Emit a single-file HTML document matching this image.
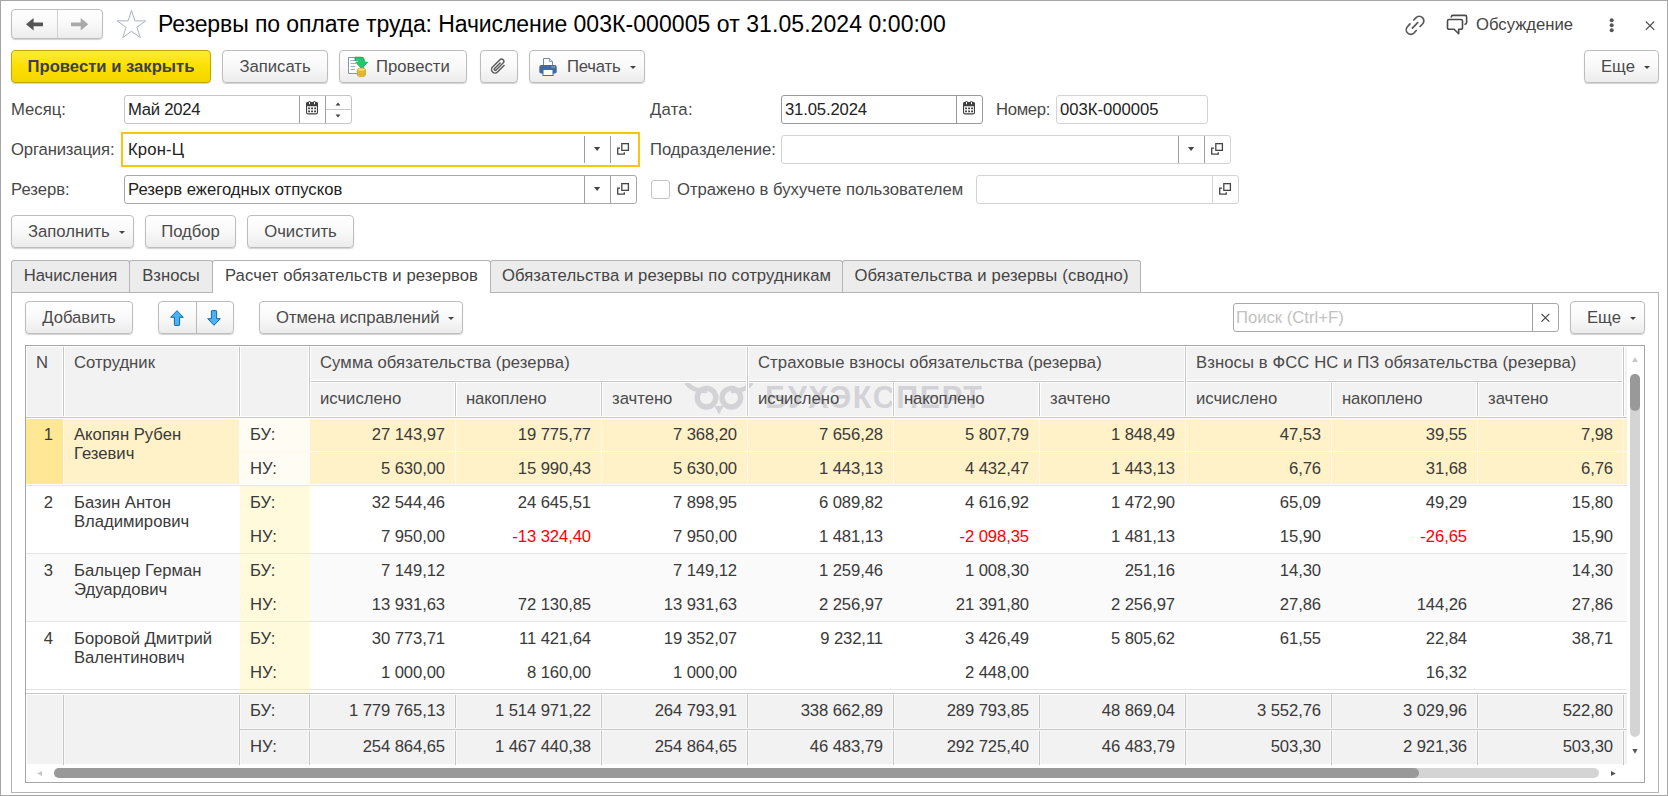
<!DOCTYPE html>
<html lang="ru"><head><meta charset="utf-8"><title>Резервы по оплате труда</title>
<style>
*{box-sizing:border-box;margin:0;padding:0}
html,body{width:1668px;height:796px;overflow:hidden;background:#fff}
body{font-family:"Liberation Sans",Arial,sans-serif;font-size:16.67px;color:#333;position:relative}
.abs,.btn,.lbl,.inp,.tab,.t,.tri{position:absolute}
#frame{position:absolute;left:0;top:0;width:1668px;height:796px;border:1px solid #a6a6a6}
.btn{height:33px;border:1px solid #bdbdbd;border-radius:4px;background:linear-gradient(#ffffff 0%,#f9f9f9 50%,#ececec 100%);box-shadow:0 1px 1px rgba(0,0,0,.18);line-height:32px;text-align:center;color:#4a4a4a;white-space:nowrap}
.btn.y{background:linear-gradient(#ffeb3a 0%,#fde000 50%,#f4d500 100%);border-color:#c2a600;font-weight:bold;color:#3c3f4e}
.lbl{line-height:20px;color:#484848;white-space:nowrap}
.inp{height:29px;border:1px solid #c4c4c4;border-radius:3px;background:#fff;line-height:27px;padding-left:3px;color:#222;white-space:nowrap}
.inp .sep{position:absolute;top:0;bottom:0;width:1px;background:#c4c4c4}
.inp.d{border-color:#a8a8a8}.inp.d .sep{background:#a0a0a0}
.inp.dd{border-color:#9a9a9a}.inp.dd .sep{background:#9a9a9a}
.inp.m{border-color:#c6c6c6}.inp.m .sep{background:#a0a0a0}
.inp.l{border-color:#d4d4d4}.inp.l .sep{background:#d4d4d4}.inp.ds .sep{background:#a0a0a0}
.tri{width:0;height:0;border-left:4px solid transparent;border-right:4px solid transparent;border-top:4px solid #444}
.tab{top:260px;height:32px;border:1px solid #b4b4b4;border-bottom:none;border-radius:3px 3px 0 0;background:#ececec;line-height:29px;text-align:center;color:#444;white-space:nowrap}
.tab.a{background:#fff;height:33px;z-index:2}
.t{white-space:nowrap;line-height:21px;color:#3a3a3a}
.h{color:#4a4a4a}
.r{text-align:right;letter-spacing:-.1px}
.neg{color:#ff0000}

</style></head><body>
<div id="frame"></div>

<div class="btn" style="left:11px;top:9px;width:92px;height:30px;border-radius:4px"></div>
<div class="abs" style="left:57px;top:10px;width:1px;height:28px;background:#cfcfcf"></div>
<svg class="abs" style="left:26px;top:18px" width="18" height="13" viewBox="0 0 18 13"><path d="M0 6.300 L7.600 0 V4.400 H17 V8.300 H7.600 V12.600 Z" fill="#555"/></svg>
<svg class="abs" style="left:71px;top:18px" width="18" height="13" viewBox="0 0 18 13"><path d="M17.300 6.300 L9.700 0 V4.400 H0 V8.300 H9.700 V12.600 Z" fill="#aaa"/></svg>
<svg class="abs" style="left:116px;top:9px" width="32" height="32" viewBox="0 0 32 32"><path d="M15.50 1.50 L18.87 11.86 L29.77 11.86 L20.95 18.27 L24.32 28.64 L15.50 22.23 L6.68 28.64 L10.05 18.27 L1.23 11.86 L12.13 11.86 Z" fill="#fff" stroke="#a9b3be" stroke-width="1" stroke-linejoin="miter"/></svg>
<div class="t" id="title" style="left:158px;top:10px;font-size:23px;line-height:28px;color:#000"><span style="letter-spacing:-.09px">Резервы по оплате труда: Начисление </span><span style="letter-spacing:.07px">003К-000005 от 31.05.2024 0:00:00</span></div>
<svg class="abs" style="left:1405px;top:15px" width="21" height="21" viewBox="0 0 21 21" fill="none" stroke="#585858" stroke-width="1.700" stroke-linecap="round"><path d="M8.800 5 L11.100 2.600 A4.500 4.500 0 0 1 17.500 9 L15.100 11.500"/><path d="M5 8.900 L2.600 11.600 A4.500 4.500 0 0 0 9 18 L11.200 15.500"/><path d="M7.400 13.100 L12.700 7.600"/></svg>
<svg class="abs" style="left:1446px;top:14px" width="22" height="22" viewBox="0 0 22 22" fill="none" stroke="#4a4a4a" stroke-width="1.600" stroke-linejoin="round" stroke-linecap="round"><path d="M5.300 3 A1.600 1.600 0 0 1 6.900 1.400 H19 A1.600 1.600 0 0 1 20.600 3 V8.600 A1.600 1.600 0 0 1 19 10.200"/><path d="M3 5.500 H15 A1.500 1.500 0 0 1 16.500 7 V13.800 A1.500 1.500 0 0 1 15 15.300 H12.700 V19.800 L8.100 15.300 H3 A1.500 1.500 0 0 1 1.500 13.800 V7 A1.500 1.500 0 0 1 3 5.500 Z"/></svg>
<div class="t" style="left:1476px;top:14px;color:#444">Обсуждение</div>
<svg class="abs" style="left:1608px;top:17px" width="8" height="17" viewBox="0 0 8 17" fill="#555"><circle cx="3.700" cy="3.300" r="2"/><circle cx="3.700" cy="8.250" r="2"/><circle cx="3.700" cy="13.200" r="2"/></svg>
<svg class="abs" style="left:1645px;top:21px" width="10" height="10" viewBox="0 0 10 10" stroke="#555" stroke-width="1.300"><path d="M0.800 0.500 L9.200 8.900 M9.200 0.500 L0.800 8.900"/></svg>
<div class="btn y" style="left:11px;top:50px;width:200px;height:33px;">Провести и закрыть</div><div class="btn " style="left:222px;top:50px;width:106px;height:33px;">Записать</div><div class="btn " style="left:339px;top:50px;width:128px;height:33px;text-align:left;padding-left:36px;">Провести</div><svg class="abs" style="left:347px;top:56px" width="24" height="24" viewBox="0 0 24 24">
<path d="M1.500 1.500 H16.500 V17.500 H1.500 Z" fill="#fff" stroke="#8197b8" stroke-width="1"/>
<path d="M3.500 4.500 H9 M3.500 7.500 H9 M3.500 10.500 H8.500 M3.500 13.500 H8" stroke="#9db0cb" stroke-width="1"/>
<path d="M8 1.200 H13.500 C16.600 1.200 17.700 3.500 17.700 6.200 H20.600 L14.700 12.800 L8.800 6.200 H11.700 C11.700 5 11.200 4.600 10 4.600 H8 Z" fill="#25c76e" stroke="#14a355" stroke-width=".8" stroke-linejoin="round"/>
<path d="M10.300 13.600 V19 A4.050 1.700 0 0 0 18.400 19 V13.600 Z" fill="#f3c935" stroke="#c59c1c" stroke-width=".7"/>
<ellipse cx="14.350" cy="13.600" rx="4.050" ry="1.700" fill="#fbe27a" stroke="#c59c1c" stroke-width=".7"/>
<path d="M10.300 15.500 A4.050 1.700 0 0 0 18.400 15.500 M10.300 17.300 A4.050 1.700 0 0 0 18.400 17.300" fill="none" stroke="#c59c1c" stroke-width=".7"/>
</svg><div class="btn " style="left:480px;top:50px;width:38px;height:33px;"></div><svg class="abs" style="left:490px;top:58px" width="17" height="17" viewBox="0 0 17 17" fill="none" stroke="#5a5a5a" stroke-width="1.600" stroke-linecap="round"><g transform="translate(8.300,8.300) rotate(45) scale(.92)"><path d="M3.800 -5 V5 a3.800 3.800 0 0 1 -7.600 0 V-6.200 a2.500 2.500 0 0 1 5 0 V4.500 a1.200 1.200 0 0 1 -2.400 0 V-4"/></g></svg><div class="btn " style="left:529px;top:50px;width:116px;height:33px;text-align:left;padding-left:37px;"><span style="letter-spacing:-.2px">Печать</span></div><svg class="abs" style="left:539px;top:58px" width="18" height="18" viewBox="0 0 18 18">
<path d="M4.500 8 V0.500 H10.500 L13.500 3.500 V8 Z" fill="#fff" stroke="#6f89a8" stroke-width="1"/><path d="M10.500 0.500 V3.500 H13.500" fill="#e8eef5" stroke="#6f89a8" stroke-width=".8"/>
<rect x="0.300" y="7" width="17.400" height="8.600" rx="2" fill="#41699a"/>
<rect x="4" y="11.500" width="10" height="6" fill="#fff" stroke="#41699a" stroke-width="1"/>
<rect x="12.600" y="8.500" width="1" height="1" fill="#fff"/><rect x="14.600" y="8.500" width="1" height="1" fill="#fff"/>
</svg><svg class="abs" style="left:630px;top:66px" width="6" height="3" viewBox="0 0 6 3"><path d="M0 0 H6 L3 3 Z" fill="#444"/></svg><div class="btn " style="left:1584px;top:50px;width:75px;height:33px;text-align:left;padding-left:16px;">Еще</div><svg class="abs" style="left:1644px;top:66px" width="6" height="3" viewBox="0 0 6 3"><path d="M0 0 H6 L3 3 Z" fill="#444"/></svg><div class="lbl" style="left:11px;top:100px">Месяц:</div><div class="inp m" style="left:124px;top:95px;width:228px;height:29px;"><span style="letter-spacing:-.27px">Май 2024</span><i class="sep" style="left:174px"></i><i class="sep" style="left:200px"></i></div><svg class="abs" style="left:306px;top:101px" width="12" height="14" viewBox="0 0 12 14"><rect x="0.550" y="1.600" width="10.900" height="11.300" rx="1.500" fill="#fff" stroke="#3f3f3f" stroke-width="1.100"/><path d="M0 5.200 V3 a2 2 0 0 1 2 -2 H10 a2 2 0 0 1 2 2 V5.200 Z" fill="#3f3f3f"/><circle cx="3.500" cy="1.500" r="1.500" fill="#3f3f3f"/><circle cx="8.500" cy="1.500" r="1.500" fill="#3f3f3f"/><rect x="3" y="0.800" width="1" height="2.500" rx=".5" fill="#fff"/><rect x="8" y="0.800" width="1" height="2.500" rx=".5" fill="#fff"/><path d="M2.200 6.500 h1.700 v1.700 h-1.700z M5.200 6.500 h1.700 v1.700 h-1.700z M8.200 6.500 h1.700 v1.700 h-1.700z M2.200 9.500 h1.700 v1.700 h-1.700z M5.200 9.500 h1.700 v1.700 h-1.700z M8.200 9.500 h1.700 v1.700 h-1.700z" fill="#2e2e2e"/></svg><div class="abs" style="left:326px;top:109px;width:25px;height:1px;background:#c9c9c9"></div><svg class="abs" style="left:335px;top:102px" width="6" height="4" viewBox="0 0 6 4"><path d="M0.500 3.400 L3 0.400 L5.500 3.400 Z" fill="#444"/></svg><svg class="abs" style="left:335px;top:114px" width="6" height="4" viewBox="0 0 6 4"><path d="M0.500 0.600 L3 3.600 L5.500 0.600 Z" fill="#444"/></svg><div class="lbl" style="left:650px;top:100px"><span style="letter-spacing:.25px">Дата:</span></div><div class="inp dd" style="left:781px;top:95px;width:202px;height:29px;"><span style="letter-spacing:-.15px">31.05.2024</span><i class="sep" style="left:174px"></i></div><svg class="abs" style="left:963px;top:101px" width="12" height="14" viewBox="0 0 12 14"><rect x="0.550" y="1.600" width="10.900" height="11.300" rx="1.500" fill="#fff" stroke="#3f3f3f" stroke-width="1.100"/><path d="M0 5.200 V3 a2 2 0 0 1 2 -2 H10 a2 2 0 0 1 2 2 V5.200 Z" fill="#3f3f3f"/><circle cx="3.500" cy="1.500" r="1.500" fill="#3f3f3f"/><circle cx="8.500" cy="1.500" r="1.500" fill="#3f3f3f"/><rect x="3" y="0.800" width="1" height="2.500" rx=".5" fill="#fff"/><rect x="8" y="0.800" width="1" height="2.500" rx=".5" fill="#fff"/><path d="M2.200 6.500 h1.700 v1.700 h-1.700z M5.200 6.500 h1.700 v1.700 h-1.700z M8.200 6.500 h1.700 v1.700 h-1.700z M2.200 9.500 h1.700 v1.700 h-1.700z M5.200 9.500 h1.700 v1.700 h-1.700z M8.200 9.500 h1.700 v1.700 h-1.700z" fill="#2e2e2e"/></svg><div class="lbl" style="left:996px;top:100px"><span style="letter-spacing:-.3px">Номер:</span></div><div class="inp l" style="left:1056px;top:95px;width:152px;height:29px;">003К-000005</div><div class="lbl" style="left:11px;top:140px"><span style="letter-spacing:-.14px">Организация:</span></div><div class="abs" style="left:121px;top:132px;width:519px;height:35px;border:2px solid #f9c30f;background:#fff"></div><div class="t" style="left:128px;top:139px;color:#222;letter-spacing:.15px">Крон-Ц</div><div class="abs" style="left:584px;top:136px;width:1px;height:27px;background:#9c9c9c"></div><div class="abs" style="left:610px;top:136px;width:1px;height:27px;background:#9c9c9c"></div><svg class="abs" style="left:594px;top:147px" width="7" height="4" viewBox="0 0 7 4"><path d="M0 0 H6.200 L3.100 4 Z" fill="#444"/></svg><svg class="abs" style="left:617px;top:143px" width="14" height="14" viewBox="0 0 14 14" fill="none" stroke="#454545" stroke-width="1.300"><rect x="4.800" y="0.650" width="6.600" height="6.700"/><path d="M3 5.100 H0.700 V11.150 H7.300 V9.300"/></svg><div class="lbl" style="left:650px;top:140px">Подразделение:</div><div class="inp l ds" style="left:781px;top:135px;width:450px;height:29px;"><i class="sep" style="left:396px"></i><i class="sep" style="left:422px"></i></div><svg class="abs" style="left:1188px;top:147px" width="7" height="4" viewBox="0 0 7 4"><path d="M0 0 H6.200 L3.100 4 Z" fill="#444"/></svg><svg class="abs" style="left:1211px;top:143px" width="14" height="14" viewBox="0 0 14 14" fill="none" stroke="#454545" stroke-width="1.300"><rect x="4.800" y="0.650" width="6.600" height="6.700"/><path d="M3 5.100 H0.700 V11.150 H7.300 V9.300"/></svg><div class="lbl" style="left:11px;top:180px">Резерв:</div><div class="inp d" style="left:124px;top:175px;width:513px;height:29px;">Резерв ежегодных отпусков<i class="sep" style="left:459px"></i><i class="sep" style="left:485px"></i></div><svg class="abs" style="left:594px;top:187px" width="7" height="4" viewBox="0 0 7 4"><path d="M0 0 H6.200 L3.100 4 Z" fill="#444"/></svg><svg class="abs" style="left:617px;top:183px" width="14" height="14" viewBox="0 0 14 14" fill="none" stroke="#454545" stroke-width="1.300"><rect x="4.800" y="0.650" width="6.600" height="6.700"/><path d="M3 5.100 H0.700 V11.150 H7.300 V9.300"/></svg><div class="abs" style="left:651px;top:180px;width:19px;height:19px;border:1px solid #c4c4c4;border-radius:3px;background:#fff"></div><div class="lbl" style="left:677px;top:180px">Отражено в бухучете пользователем</div><div class="inp l" style="left:976px;top:175px;width:263px;height:29px;"><i class="sep" style="left:235px"></i></div><svg class="abs" style="left:1219px;top:183px" width="14" height="14" viewBox="0 0 14 14" fill="none" stroke="#454545" stroke-width="1.300"><rect x="4.800" y="0.650" width="6.600" height="6.700"/><path d="M3 5.100 H0.700 V11.150 H7.300 V9.300"/></svg><div class="btn " style="left:11px;top:215px;width:123px;height:33px;text-align:left;padding-left:16px;">Заполнить</div><svg class="abs" style="left:119px;top:231px" width="6" height="3" viewBox="0 0 6 3"><path d="M0 0 H6 L3 3 Z" fill="#444"/></svg><div class="btn " style="left:145px;top:215px;width:91px;height:33px;">Подбор</div><div class="btn " style="left:247px;top:215px;width:107px;height:33px;">Очистить</div><div class="abs" style="left:11px;top:292px;width:1648px;height:501px;border:1px solid #b4b4b4;background:#fff"></div><div class="tab" style="left:11px;width:119px;letter-spacing:0px">Начисления</div><div class="tab" style="left:129px;width:84px;letter-spacing:0px">Взносы</div><div class="tab" style="left:490px;width:353px;letter-spacing:0.09px">Обязательства и резервы по сотрудникам</div><div class="tab" style="left:842px;width:299px;letter-spacing:0.15px">Обязательства и резервы (сводно)</div><div class="tab a" style="left:212px;width:279px;letter-spacing:0.09px">Расчет обязательств и резервов</div><div class="btn " style="left:25px;top:301px;width:108px;height:33px;">Добавить</div><div class="btn " style="left:158px;top:301px;width:76px;height:33px;"></div><div class="abs" style="left:196px;top:302px;width:1px;height:31px;background:#b8b8b8"></div><svg class="abs" style="left:170px;top:310px" width="14" height="16" viewBox="0 0 14 16"><path d="M7 0.700 L13.300 7.300 H9.600 V14.800 Q9.600 15.400 9 15.400 H5 Q4.400 15.400 4.400 14.800 V7.300 H0.700 Z" fill="#4db2f1" stroke="#0f69a6" stroke-width="1" stroke-linejoin="round"/></svg><svg class="abs" style="left:207px;top:310px" width="14" height="16" viewBox="0 0 14 16"><path d="M7 15.300 L13.300 8.700 H9.600 V1.200 Q9.600 0.600 9 0.600 H5 Q4.400 0.600 4.400 1.200 V8.700 H0.700 Z" fill="#4db2f1" stroke="#0f69a6" stroke-width="1" stroke-linejoin="round"/></svg><div class="btn " style="left:259px;top:301px;width:204px;height:33px;text-align:left;padding-left:16px;"><span style="letter-spacing:-.08px">Отмена исправлений</span></div><svg class="abs" style="left:448px;top:317px" width="6" height="3" viewBox="0 0 6 3"><path d="M0 0 H6 L3 3 Z" fill="#444"/></svg><div class="inp d" style="left:1233px;top:303px;width:326px;height:29px;padding-left:2px"><span style="color:#c2c2c2">Поиск (Ctrl+F)</span><i class="sep" style="left:298px"></i></div><svg class="abs" style="left:1541px;top:313px" width="9" height="9" viewBox="0 0 9 9" stroke="#444" stroke-width="1.200"><path d="M0.500 0.800 L8.300 8.600 M8.300 0.800 L0.500 8.600"/></svg><div class="btn " style="left:1570px;top:301px;width:75px;height:33px;text-align:left;padding-left:16px;">Еще</div><svg class="abs" style="left:1630px;top:317px" width="6" height="3" viewBox="0 0 6 3"><path d="M0 0 H6 L3 3 Z" fill="#444"/></svg><div class="abs" style="left:25px;top:345px;width:1620px;height:438px;border:1px solid #a6a6a6;background:#fff"></div><div class="abs" style="left:27px;top:347px;width:1600px;height:70px;background:#f2f2f2"></div><div class="abs" style="left:680px;top:376px;width:320px;height:42px;opacity:.18;overflow:hidden">
<svg class="abs" style="left:5px;top:5px" width="68" height="34" viewBox="0 0 68 34"><path d="M1 1 C6 9 14 9.500 22 10 M67 1 C62 9 54 9.500 46 10" stroke="#4a4560" stroke-width="4.500" fill="none"/><circle cx="21.500" cy="16.700" r="9.300" fill="none" stroke="#4a4560" stroke-width="5.400"/><circle cx="46.300" cy="16.700" r="9.300" fill="none" stroke="#4a4560" stroke-width="5.400"/><path d="M29.500 25 L34 33.500 L38.500 25 Z" fill="#4a4560"/></svg>
<span class="t" id="wm" style="left:85px;top:3px;font-weight:bold;font-size:30.500px;line-height:36px;color:#4a4560;letter-spacing:1.6px">БУХЭКСПЕРТ</span></div><div class="abs" style="left:310px;top:381px;width:1313px;height:1px;background:#c6c6c6;box-shadow:0 -1px 0 #fff,0 1px 0 #fff"></div><div class="abs" style="left:63px;top:347px;width:1px;height:70px;background:#c6c6c6;box-shadow:-1px 0 0 #fff,1px 0 0 #fff"></div><div class="abs" style="left:239px;top:347px;width:1px;height:70px;background:#c6c6c6;box-shadow:-1px 0 0 #fff,1px 0 0 #fff"></div><div class="abs" style="left:309px;top:347px;width:1px;height:70px;background:#c6c6c6;box-shadow:-1px 0 0 #fff,1px 0 0 #fff"></div><div class="abs" style="left:747px;top:347px;width:1px;height:70px;background:#c6c6c6;box-shadow:-1px 0 0 #fff,1px 0 0 #fff"></div><div class="abs" style="left:1185px;top:347px;width:1px;height:70px;background:#c6c6c6;box-shadow:-1px 0 0 #fff,1px 0 0 #fff"></div><div class="abs" style="left:1623px;top:347px;width:1px;height:70px;background:#c6c6c6;box-shadow:-1px 0 0 #fff,1px 0 0 #fff"></div><div class="abs" style="left:455px;top:383px;width:1px;height:34px;background:#c6c6c6;box-shadow:-1px 0 0 #fff,1px 0 0 #fff"></div><div class="abs" style="left:601px;top:383px;width:1px;height:34px;background:#c6c6c6;box-shadow:-1px 0 0 #fff,1px 0 0 #fff"></div><div class="abs" style="left:893px;top:383px;width:1px;height:34px;background:#c6c6c6;box-shadow:-1px 0 0 #fff,1px 0 0 #fff"></div><div class="abs" style="left:1039px;top:383px;width:1px;height:34px;background:#c6c6c6;box-shadow:-1px 0 0 #fff,1px 0 0 #fff"></div><div class="abs" style="left:1331px;top:383px;width:1px;height:34px;background:#c6c6c6;box-shadow:-1px 0 0 #fff,1px 0 0 #fff"></div><div class="abs" style="left:1477px;top:383px;width:1px;height:34px;background:#c6c6c6;box-shadow:-1px 0 0 #fff,1px 0 0 #fff"></div><div class="abs" style="left:26px;top:417px;width:1601px;height:1px;background:#c6c6c6;box-shadow:0 -1px 0 #fff,0 1px 0 #fff"></div><div class="t h" style="left:36px;top:352px;">N</div><div class="t h" style="left:74px;top:352px;">Сотрудник</div><div class="t h" style="left:320px;top:352px;letter-spacing:.09px">Сумма обязательства (резерва)</div><div class="t h" style="left:758px;top:352px;letter-spacing:.09px">Страховые взносы обязательства (резерва)</div><div class="t h" style="left:1196px;top:352px;letter-spacing:.09px">Взносы в ФСС НС и ПЗ обязательства (резерва)</div><div class="t h" style="left:320px;top:388px;">исчислено</div><div class="t h" style="left:466px;top:388px;letter-spacing:-.15px">накоплено</div><div class="t h" style="left:612px;top:388px;">зачтено</div><div class="t h" style="left:758px;top:388px;">исчислено</div><div class="t h" style="left:904px;top:388px;letter-spacing:-.15px">накоплено</div><div class="t h" style="left:1050px;top:388px;">зачтено</div><div class="t h" style="left:1196px;top:388px;">исчислено</div><div class="t h" style="left:1342px;top:388px;letter-spacing:-.15px">накоплено</div><div class="t h" style="left:1488px;top:388px;">зачтено</div><div class="abs" style="left:26px;top:419px;width:1601px;height:65px;background:#fff2c8"></div><div class="abs" style="left:26px;top:419px;width:37px;height:65px;background:#ffe793"></div><div class="abs" style="left:63px;top:419px;width:1px;height:65px;background:#fffdf6"></div><div class="abs" style="left:239px;top:419px;width:71px;height:65px;background:#fffdf3"></div><div class="abs" style="left:455px;top:419px;width:1px;height:65px;background:#fffaeb"></div><div class="abs" style="left:601px;top:419px;width:1px;height:65px;background:#fffaeb"></div><div class="abs" style="left:747px;top:419px;width:1px;height:65px;background:#fffaeb"></div><div class="abs" style="left:893px;top:419px;width:1px;height:65px;background:#fffaeb"></div><div class="abs" style="left:1039px;top:419px;width:1px;height:65px;background:#fffaeb"></div><div class="abs" style="left:1185px;top:419px;width:1px;height:65px;background:#fffaeb"></div><div class="abs" style="left:1331px;top:419px;width:1px;height:65px;background:#fffaeb"></div><div class="abs" style="left:1477px;top:419px;width:1px;height:65px;background:#fffaeb"></div><div class="abs" style="left:1623px;top:419px;width:1px;height:65px;background:#fffaeb"></div><div class="abs" style="left:239px;top:451px;width:1388px;height:1px;background:#fffaeb"></div><div class="abs" style="left:26px;top:485px;width:1601px;height:1px;background:#e4e4e4"></div><div class="t " style="left:26px;top:424px;width:37px;text-align:right;padding-right:10px">1</div><div class="t " style="left:74px;top:424px;">Акопян Рубен</div><div class="t " style="left:74px;top:443px;">Гезевич</div><div class="t " style="left:250px;top:424px;">БУ:</div><div class="t " style="left:250px;top:458px;">НУ:</div><div class="t r" style="left:305px;top:424px;width:140px">27 143,97</div><div class="t r" style="left:305px;top:458px;width:140px">5 630,00</div><div class="t r" style="left:451px;top:424px;width:140px">19 775,77</div><div class="t r" style="left:451px;top:458px;width:140px">15 990,43</div><div class="t r" style="left:597px;top:424px;width:140px">7 368,20</div><div class="t r" style="left:597px;top:458px;width:140px">5 630,00</div><div class="t r" style="left:743px;top:424px;width:140px">7 656,28</div><div class="t r" style="left:743px;top:458px;width:140px">1 443,13</div><div class="t r" style="left:889px;top:424px;width:140px">5 807,79</div><div class="t r" style="left:889px;top:458px;width:140px">4 432,47</div><div class="t r" style="left:1035px;top:424px;width:140px">1 848,49</div><div class="t r" style="left:1035px;top:458px;width:140px">1 443,13</div><div class="t r" style="left:1181px;top:424px;width:140px">47,53</div><div class="t r" style="left:1181px;top:458px;width:140px">6,76</div><div class="t r" style="left:1327px;top:424px;width:140px">39,55</div><div class="t r" style="left:1327px;top:458px;width:140px">31,68</div><div class="t r" style="left:1473px;top:424px;width:140px">7,98</div><div class="t r" style="left:1473px;top:458px;width:140px">6,76</div><div class="abs" style="left:26px;top:486px;width:1601px;height:67px;background:#fff"></div><div class="abs" style="left:240px;top:486px;width:70px;height:67px;background:#fffadc"></div><div class="abs" style="left:26px;top:553px;width:1601px;height:1px;background:#e4e4e4"></div><div class="abs" style="left:240px;top:553px;width:70px;height:1px;background:#ece8d2"></div><div class="t " style="left:26px;top:492px;width:37px;text-align:right;padding-right:10px">2</div><div class="t " style="left:74px;top:492px;">Базин Антон</div><div class="t " style="left:74px;top:511px;">Владимирович</div><div class="t " style="left:250px;top:492px;">БУ:</div><div class="t " style="left:250px;top:526px;">НУ:</div><div class="t r" style="left:305px;top:492px;width:140px">32 544,46</div><div class="t r" style="left:305px;top:526px;width:140px">7 950,00</div><div class="t r" style="left:451px;top:492px;width:140px">24 645,51</div><div class="t r neg" style="left:451px;top:526px;width:140px">-13 324,40</div><div class="t r" style="left:597px;top:492px;width:140px">7 898,95</div><div class="t r" style="left:597px;top:526px;width:140px">7 950,00</div><div class="t r" style="left:743px;top:492px;width:140px">6 089,82</div><div class="t r" style="left:743px;top:526px;width:140px">1 481,13</div><div class="t r" style="left:889px;top:492px;width:140px">4 616,92</div><div class="t r neg" style="left:889px;top:526px;width:140px">-2 098,35</div><div class="t r" style="left:1035px;top:492px;width:140px">1 472,90</div><div class="t r" style="left:1035px;top:526px;width:140px">1 481,13</div><div class="t r" style="left:1181px;top:492px;width:140px">65,09</div><div class="t r" style="left:1181px;top:526px;width:140px">15,90</div><div class="t r" style="left:1327px;top:492px;width:140px">49,29</div><div class="t r neg" style="left:1327px;top:526px;width:140px">-26,65</div><div class="t r" style="left:1473px;top:492px;width:140px">15,80</div><div class="t r" style="left:1473px;top:526px;width:140px">15,90</div><div class="abs" style="left:26px;top:554px;width:1601px;height:67px;background:#fafafa"></div><div class="abs" style="left:240px;top:554px;width:70px;height:67px;background:#fffadc"></div><div class="abs" style="left:26px;top:621px;width:1601px;height:1px;background:#e4e4e4"></div><div class="abs" style="left:240px;top:621px;width:70px;height:1px;background:#ece8d2"></div><div class="t " style="left:26px;top:560px;width:37px;text-align:right;padding-right:10px">3</div><div class="t " style="left:74px;top:560px;">Бальцер Герман</div><div class="t " style="left:74px;top:579px;">Эдуардович</div><div class="t " style="left:250px;top:560px;">БУ:</div><div class="t " style="left:250px;top:594px;">НУ:</div><div class="t r" style="left:305px;top:560px;width:140px">7 149,12</div><div class="t r" style="left:305px;top:594px;width:140px">13 931,63</div><div class="t r" style="left:451px;top:594px;width:140px">72 130,85</div><div class="t r" style="left:597px;top:560px;width:140px">7 149,12</div><div class="t r" style="left:597px;top:594px;width:140px">13 931,63</div><div class="t r" style="left:743px;top:560px;width:140px">1 259,46</div><div class="t r" style="left:743px;top:594px;width:140px">2 256,97</div><div class="t r" style="left:889px;top:560px;width:140px">1 008,30</div><div class="t r" style="left:889px;top:594px;width:140px">21 391,80</div><div class="t r" style="left:1035px;top:560px;width:140px">251,16</div><div class="t r" style="left:1035px;top:594px;width:140px">2 256,97</div><div class="t r" style="left:1181px;top:560px;width:140px">14,30</div><div class="t r" style="left:1181px;top:594px;width:140px">27,86</div><div class="t r" style="left:1327px;top:594px;width:140px">144,26</div><div class="t r" style="left:1473px;top:560px;width:140px">14,30</div><div class="t r" style="left:1473px;top:594px;width:140px">27,86</div><div class="abs" style="left:26px;top:622px;width:1601px;height:67px;background:#fff"></div><div class="abs" style="left:240px;top:622px;width:70px;height:71px;background:#fffadc"></div><div class="abs" style="left:26px;top:689px;width:1601px;height:1px;background:#e4e4e4"></div><div class="abs" style="left:240px;top:689px;width:70px;height:1px;background:#ece8d2"></div><div class="t " style="left:26px;top:628px;width:37px;text-align:right;padding-right:10px">4</div><div class="t " style="left:74px;top:628px;">Боровой Дмитрий</div><div class="t " style="left:74px;top:647px;">Валентинович</div><div class="t " style="left:250px;top:628px;">БУ:</div><div class="t " style="left:250px;top:662px;">НУ:</div><div class="t r" style="left:305px;top:628px;width:140px">30 773,71</div><div class="t r" style="left:305px;top:662px;width:140px">1 000,00</div><div class="t r" style="left:451px;top:628px;width:140px">11 421,64</div><div class="t r" style="left:451px;top:662px;width:140px">8 160,00</div><div class="t r" style="left:597px;top:628px;width:140px">19 352,07</div><div class="t r" style="left:597px;top:662px;width:140px">1 000,00</div><div class="t r" style="left:743px;top:628px;width:140px">9 232,11</div><div class="t r" style="left:889px;top:628px;width:140px">3 426,49</div><div class="t r" style="left:889px;top:662px;width:140px">2 448,00</div><div class="t r" style="left:1035px;top:628px;width:140px">5 805,62</div><div class="t r" style="left:1181px;top:628px;width:140px">61,55</div><div class="t r" style="left:1327px;top:628px;width:140px">22,84</div><div class="t r" style="left:1327px;top:662px;width:140px">16,32</div><div class="t r" style="left:1473px;top:628px;width:140px">38,71</div><div class="abs" style="left:27px;top:695px;width:1600px;height:69px;background:#f2f2f2"></div><div class="abs" style="left:26px;top:693px;width:1601px;height:1px;background:#c6c6c6;box-shadow:0 -1px 0 #fff,0 1px 0 #fff"></div><div class="abs" style="left:240px;top:690px;width:70px;height:3px;background:#fffadc"></div><div class="abs" style="left:63px;top:695px;width:1px;height:70px;background:#c6c6c6;box-shadow:-1px 0 0 #f9f9f9,1px 0 0 #f9f9f9"></div><div class="abs" style="left:239px;top:695px;width:1px;height:70px;background:#c6c6c6;box-shadow:-1px 0 0 #f9f9f9,1px 0 0 #f9f9f9"></div><div class="abs" style="left:309px;top:695px;width:1px;height:70px;background:#c6c6c6;box-shadow:-1px 0 0 #f9f9f9,1px 0 0 #f9f9f9"></div><div class="abs" style="left:455px;top:695px;width:1px;height:70px;background:#c6c6c6;box-shadow:-1px 0 0 #f9f9f9,1px 0 0 #f9f9f9"></div><div class="abs" style="left:601px;top:695px;width:1px;height:70px;background:#c6c6c6;box-shadow:-1px 0 0 #f9f9f9,1px 0 0 #f9f9f9"></div><div class="abs" style="left:747px;top:695px;width:1px;height:70px;background:#c6c6c6;box-shadow:-1px 0 0 #f9f9f9,1px 0 0 #f9f9f9"></div><div class="abs" style="left:893px;top:695px;width:1px;height:70px;background:#c6c6c6;box-shadow:-1px 0 0 #f9f9f9,1px 0 0 #f9f9f9"></div><div class="abs" style="left:1039px;top:695px;width:1px;height:70px;background:#c6c6c6;box-shadow:-1px 0 0 #f9f9f9,1px 0 0 #f9f9f9"></div><div class="abs" style="left:1185px;top:695px;width:1px;height:70px;background:#c6c6c6;box-shadow:-1px 0 0 #f9f9f9,1px 0 0 #f9f9f9"></div><div class="abs" style="left:1331px;top:695px;width:1px;height:70px;background:#c6c6c6;box-shadow:-1px 0 0 #f9f9f9,1px 0 0 #f9f9f9"></div><div class="abs" style="left:1477px;top:695px;width:1px;height:70px;background:#c6c6c6;box-shadow:-1px 0 0 #f9f9f9,1px 0 0 #f9f9f9"></div><div class="abs" style="left:1623px;top:695px;width:1px;height:70px;background:#c6c6c6;box-shadow:-1px 0 0 #f9f9f9,1px 0 0 #f9f9f9"></div><div class="abs" style="left:240px;top:729px;width:1387px;height:1px;background:#c6c6c6;box-shadow:0 -1px 0 #f9f9f9,0 1px 0 #f9f9f9"></div><div class="t " style="left:250px;top:700px;">БУ:</div><div class="t " style="left:250px;top:736px;">НУ:</div><div class="t r" style="left:305px;top:700px;width:140px">1 779 765,13</div><div class="t r" style="left:305px;top:736px;width:140px">254 864,65</div><div class="t r" style="left:451px;top:700px;width:140px">1 514 971,22</div><div class="t r" style="left:451px;top:736px;width:140px">1 467 440,38</div><div class="t r" style="left:597px;top:700px;width:140px">264 793,91</div><div class="t r" style="left:597px;top:736px;width:140px">254 864,65</div><div class="t r" style="left:743px;top:700px;width:140px">338 662,89</div><div class="t r" style="left:743px;top:736px;width:140px">46 483,79</div><div class="t r" style="left:889px;top:700px;width:140px">289 793,85</div><div class="t r" style="left:889px;top:736px;width:140px">292 725,40</div><div class="t r" style="left:1035px;top:700px;width:140px">48 869,04</div><div class="t r" style="left:1035px;top:736px;width:140px">46 483,79</div><div class="t r" style="left:1181px;top:700px;width:140px">3 552,76</div><div class="t r" style="left:1181px;top:736px;width:140px">503,30</div><div class="t r" style="left:1327px;top:700px;width:140px">3 029,96</div><div class="t r" style="left:1327px;top:736px;width:140px">2 921,36</div><div class="t r" style="left:1473px;top:700px;width:140px">522,80</div><div class="t r" style="left:1473px;top:736px;width:140px">503,30</div><div class="abs" style="left:26px;top:765px;width:1618px;height:17px;background:#fff"></div><div class="abs" style="left:1627px;top:346px;width:17px;height:436px;background:#fff"></div><div class="abs" style="left:1630px;top:374px;width:10px;height:363px;border-radius:5px;background:#d4d4d4"></div><div class="abs" style="left:1630px;top:374px;width:10px;height:37px;border-radius:5px;background:#999"></div><svg class="abs" style="left:1632px;top:357px" width="6" height="5" viewBox="0 0 6 5"><path d="M3 0 L5.800 5 H0.200 Z" fill="#c6c6c6"/></svg><svg class="abs" style="left:1632px;top:749px" width="6" height="5" viewBox="0 0 6 5"><path d="M3 4.800 L5.600 0 H0.400 Z" fill="#555"/></svg><div class="abs" style="left:54px;top:768px;width:1545px;height:10px;border-radius:5px;background:#d4d4d4"></div><div class="abs" style="left:54px;top:768px;width:1365px;height:10px;border-radius:5px;background:#999"></div><svg class="abs" style="left:37px;top:771px" width="5" height="5" viewBox="0 0 5 5"><path d="M0.200 2.500 L5 0 V5 Z" fill="#c6c6c6"/></svg><svg class="abs" style="left:1611px;top:771px" width="5" height="5" viewBox="0 0 5 5"><path d="M4.800 2.500 L0 0 V5 Z" fill="#555"/></svg>
</body></html>
